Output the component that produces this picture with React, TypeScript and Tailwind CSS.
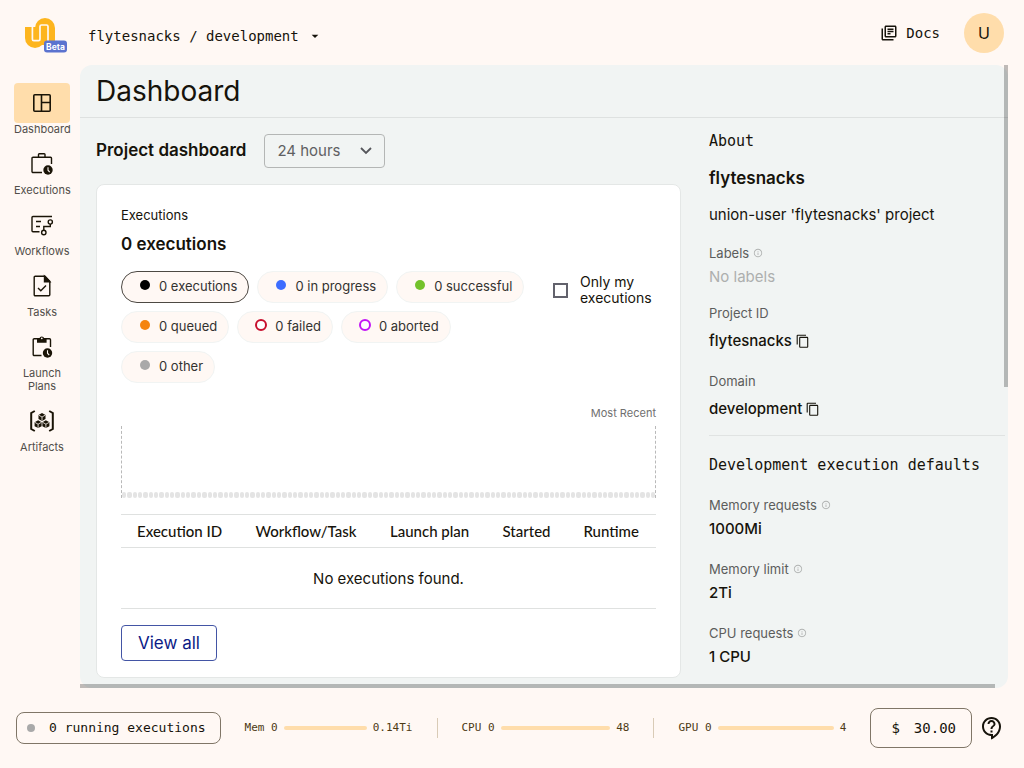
import type { ReactNode } from "react";
import {
  MdArrowDropDown,
  MdInfoOutline,
  MdOutlineContactSupport,
  MdOutlineLibraryBooks,
} from "react-icons/md";

const mono = "font-['DejaVu_Sans_Mono','Liberation_Mono',monospace]";

function Logo() {
  return (
    <svg viewBox="0 0 43 36" className="h-9 w-[43px]" aria-hidden="true">
      <path d="M0 10h20v11a10 10 0 0 1-20 0Z" fill="#fdb51e" />
      <path d="M10 28V11a10 10 0 0 1 20 0v17H20Z" fill="#fdb51e" />
      <path d="M0 10h8V0H0Z" fill="#fff8f4" />
      <path d="M20 32c2-2 3.500-4 3.500-8H31v8Z" fill="#fff8f4" />
      <path d="M7.400 8.500v13.700q0 1.500 1.500 1.500h4.600q1.500 0 1.500-1.500V9.500q0-1.500 1.500-1.500h5q1.500 0 1.500 1.500V24" fill="none" stroke="#fff8f4" strokeWidth="1.700" />
      <rect x="19" y="23.500" width="23" height="12" rx="3" fill="#5b73cf" />
      <text x="30.500" y="32.600" textAnchor="middle" fontSize="8.500" fontWeight="700" fill="#ffffff" fontFamily="Inter, sans-serif">Beta</text>
    </svg>
  );
}

function Svg({ children }: { children: ReactNode }) {
  return (
    <svg viewBox="0 0 24 24" className="size-6" fill="none" stroke="currentColor" strokeWidth="1.400" aria-hidden="true">
      {children}
    </svg>
  );
}

function Clock({ cx, cy }: { cx: number; cy: number }) {
  return (
    <>
      <circle cx={cx} cy={cy} r="4.700" fill="currentColor" stroke="none" />
      <path d={`M${cx} ${cy - 2.8}v3l1.700 1.900`} stroke="#fff8f4" strokeWidth="1.100" />
    </>
  );
}

function DashboardIcon() {
  return (
    <Svg>
      <rect x="3.800" y="3.800" width="16.400" height="16.400" rx="1" strokeWidth="1.600" />
      <path d="M11.500 4v16M11.500 11.500H20" strokeWidth="1.600" />
    </Svg>
  );
}

function ExecutionsIcon() {
  return (
    <Svg>
      <path d="M12 20.500H3a1 1 0 0 1-1-1V6.200a1 1 0 0 1 1-1h17.500a1 1 0 0 1 1 1V12M8.500 5V2.500a.8.800 0 0 1 .8-.8h4.900a.8.800 0 0 1 .8.800V5" />
      <Clock cx={18} cy={18} />
    </Svg>
  );
}

function WorkflowsIcon() {
  return (
    <Svg>
      <path d="M22 3.500H3a1 1 0 0 0-1 1v13.300a1 1 0 0 0 1 1h6.500M6 8.500h5M6 13.500h4M20.300 11v2.500h-6.500v3.700" />
      <circle cx="20.300" cy="9" r="2.100" />
      <circle cx="13.800" cy="19.500" r="2.200" />
    </Svg>
  );
}

function TasksIcon() {
  return (
    <Svg>
      <path d="M5.200 2.200h9.800l4.800 5v13.600a1 1 0 0 1-1 1H5.200a1 1 0 0 1-1-1V3.200a1 1 0 0 1 1-1ZM8 14l2.800 2.800L16 11.500" />
      <path d="M14.500 2.200v5.500h5.300Z" fill="currentColor" />
    </Svg>
  );
}

function LaunchIcon() {
  return (
    <Svg>
      <path d="M11.500 20.500H4.200a1 1 0 0 1-1-1V4.700a1 1 0 0 1 1-1H19.500a1 1 0 0 1 1 1V12" />
      <path d="M7 3.200h2.400a2.500 2.500 0 0 1 4.800 0h2.400v4.500H7Z" fill="currentColor" stroke="none" />
      <circle cx="11.800" cy="3.300" r=".9" fill="#fff8f4" stroke="none" />
      <Clock cx={17.5} cy={18} />
    </Svg>
  );
}

function Cube({ x, y }: { x: number; y: number }) {
  return (
    <g transform={`translate(${x} ${y})`}>
      <path d="M0-3.900 3.500-2v4L0 3.900-3.500 2v-4Z" fill="currentColor" stroke="none" />
      <path d="M-3.200-1.800 0 0l3.200-1.800M0 0v3.600" stroke="#fff8f4" strokeWidth=".8" />
    </g>
  );
}

function ArtifactsIcon() {
  return (
    <Svg>
      <path d="M4.800 2 1.200 4v16l3.600 2M19.200 2l3.600 2v16l-3.600 2" strokeWidth="2" />
      <Cube x={12} y={8} />
      <Cube x={8.1} y={15.2} />
      <Cube x={15.9} y={15.2} />
    </Svg>
  );
}

const navigation = [
  { label: "Dashboard", icon: <DashboardIcon />, active: true },
  { label: "Executions", icon: <ExecutionsIcon />, active: false },
  { label: "Workflows", icon: <WorkflowsIcon />, active: false },
  { label: "Tasks", icon: <TasksIcon />, active: false },
  { label: "Launch Plans", icon: <LaunchIcon />, active: false },
  { label: "Artifacts", icon: <ArtifactsIcon />, active: false },
];

const filters = [
  { label: "0 executions", dot: "size-2.5 bg-black", border: "border-[#4d4943]" },
  { label: "0 in progress", dot: "size-2.5 bg-[#3d6dff]", border: "border-[#f1f4f3]" },
  { label: "0 successful", dot: "size-2.5 bg-[#73c22b]", border: "border-[#f1f4f3]" },
  { label: "0 queued", dot: "size-2.5 bg-[#f5840f]", border: "border-[#f1f4f3]" },
  { label: "0 failed", dot: "size-3 border-2 border-[#c8102e] bg-white", border: "border-[#f1f4f3]" },
  { label: "0 aborted", dot: "size-3 border-2 border-[#c316f5] bg-white", border: "border-[#f1f4f3]" },
  { label: "0 other", dot: "size-2.5 bg-[#a9a9a9]", border: "border-[#f1f4f3]" },
];

const columns = ["Execution ID", "Workflow/Task", "Launch plan", "Started", "Runtime"];

const resources = [
  { label: "Memory requests", value: "1000Mi" },
  { label: "Memory limit", value: "2Ti" },
  { label: "CPU requests", value: "1 CPU" },
];

const usage = [
  { label: "Mem 0", limit: "0.14Ti" },
  { label: "CPU 0", limit: "48" },
  { label: "GPU 0", limit: "4" },
];

function FieldLabel({ children, info }: { children: ReactNode; info?: boolean }) {
  return (
    <dt className="flex items-center gap-1 text-[13px] leading-5 text-[#5c5d5c]">
      {children}
      {info && <MdInfoOutline className="size-2.5 text-[#b0b2b1]" />}
    </dt>
  );
}

function Copyable({ value }: { value: string }) {
  return (
    <dd className="mt-2 flex items-center gap-1 text-[15px] leading-5 font-medium">
      {value}
      <button type="button" aria-label={`Copy ${value}`}>
        <svg viewBox="0 0 14 14" className="size-3.5" fill="none" stroke="currentColor" strokeWidth="1.100" aria-hidden="true">
          <path d="M1.200 10.500V1.700a.5.500 0 0 1 .5-.5h8.300" />
          <rect x="3.700" y="3.400" width="8" height="9.800" rx=".5" />
        </svg>
      </button>
    </dd>
  );
}

function Header() {
  return (
    <header className="flex h-[65px] shrink-0 items-center pr-5 pl-[25px]">
      <a href="#home" aria-label="Home" className="pt-1">
        <Logo />
      </a>
      <button type="button" className={`ml-5 flex items-center gap-2 pt-1.5 text-sm ${mono}`}>
        flytesnacks / development
        <MdArrowDropDown className="size-4" />
      </button>
      <a href="#docs" className={`ml-auto flex items-center gap-2 text-sm ${mono}`}>
        <MdOutlineLibraryBooks className="size-4.5" />
        Docs
      </a>
      <button type="button" className="ml-6 size-10 rounded-full bg-[#ffddab] text-base">
        U
      </button>
    </header>
  );
}

function Sidebar() {
  return (
    <nav className="w-20 shrink-0 pt-[18px] pl-1">
      <ul className="flex flex-col items-center gap-2">
        {navigation.map((item) => (
          <li key={item.label}>
            <a href="#section" className="block w-14 text-center text-[11px] leading-[13px] text-[#514e4a]">
              <span className={`flex h-10 items-center justify-center rounded text-[#1a1407] ${item.active ? "bg-[#ffddab]" : ""}`}>
                {item.icon}
              </span>
              {item.label}
            </a>
          </li>
        ))}
      </ul>
    </nav>
  );
}

function ExecutionsCard() {
  return (
    <section className="mt-4 rounded-lg border border-[#e4e7e6] bg-white px-6 pt-5 pb-4">
      <h3 className="text-[13px] leading-5">Executions</h3>
      <p className="mt-[7px] text-[17px] leading-6 font-semibold">0 executions</p>
      <div className="mt-[15px] flex items-start justify-between">
        <div className="flex max-w-[416px] flex-wrap gap-2">
          {filters.map((filter) => (
            <button
              key={filter.label}
              type="button"
              className={`flex h-8 items-center gap-2 rounded-full border bg-[#fff8f4] pr-[11px] pl-[17px] text-[13px] text-[#333230] ${filter.border}`}
            >
              <span className="mb-1 flex w-3 justify-center">
                <span className={`rounded-full ${filter.dot}`} />
              </span>
              {filter.label}
            </button>
          ))}
        </div>
        <label className="mt-[3px] flex w-[103px] items-center gap-3 text-sm leading-4">
          <input type="checkbox" className="size-[15px] shrink-0 appearance-none border-2 border-[#62626c] bg-white" />
          <span>Only my executions</span>
        </label>
      </div>
      <p className="mt-[22px] text-right text-[11px] leading-4 text-[#70706f]">Most Recent</p>
      <div className="mt-[5px] flex h-[72px] items-end gap-px border-x border-dashed border-[#b9b9b9]">
        {Array.from({ length: 100 }, (_, i) => (
          <span key={i} className="h-1.5 flex-1 rounded-[2px] bg-[#e4e4e4]" />
        ))}
      </div>
      <table className="mt-4 w-full border-collapse">
        <thead>
          <tr className="h-[33px] border-y border-[#dfe1e0]">
            {columns.map((column) => (
              <th key={column} className="px-4 text-left font-['Lato',sans-serif] text-[15px] leading-5 font-medium whitespace-nowrap">
                {column}
              </th>
            ))}
          </tr>
        </thead>
        <tbody>
          <tr className="h-[61px] border-b border-[#dfe1e0]">
            <td colSpan={5} className="pt-0.5 text-center text-[15px] leading-5">
              No executions found.
            </td>
          </tr>
        </tbody>
      </table>
      <button type="button" className="mt-4 h-9 rounded border border-[#4355a5] px-4 pt-0.5 text-[17px] text-[#0b1a86]">
        View all
      </button>
    </section>
  );
}

function About() {
  return (
    <aside className="w-[296px] shrink-0 pt-[13px]">
      <h2 className={`text-[15px] leading-5 ${mono}`}>About</h2>
      <p className="mt-[15px] text-[17px] leading-6 font-semibold">flytesnacks</p>
      <p className="mt-[15px] text-[15px] leading-5">union-user 'flytesnacks' project</p>
      <dl className="border-b border-[#e0e3e2] pb-4">
        <div className="mt-[18px]">
          <FieldLabel info>Labels</FieldLabel>
          <dd className="mt-1 text-[15px] leading-5 text-[#adafae]">No labels</dd>
        </div>
        <div className="mt-4">
          <FieldLabel>Project ID</FieldLabel>
          <Copyable value="flytesnacks" />
        </div>
        <div className="mt-5">
          <FieldLabel>Domain</FieldLabel>
          <Copyable value="development" />
        </div>
      </dl>
      <h2 className={`mt-[19px] text-[15px] leading-5 whitespace-nowrap ${mono}`}>Development execution defaults</h2>
      <dl>
        {resources.map((resource) => (
          <div key={resource.label} className="mt-5">
            <FieldLabel info>{resource.label}</FieldLabel>
            <dd className="mt-1 text-[15px] leading-5 font-medium">{resource.value}</dd>
          </div>
        ))}
      </dl>
    </aside>
  );
}

function Footer() {
  return (
    <footer className={`flex h-20 shrink-0 items-center pr-5 pl-4 ${mono}`}>
      <button type="button" className="flex h-8 items-center gap-3.5 rounded-lg border border-[#807667] pr-3.5 pl-2.5 text-[13px]">
        <span className="size-2 rounded-full bg-[#a9a9a9]" />
        0 running executions
      </button>
      <div className="flex flex-1 divide-x divide-[#d9cbb6]">
        {usage.map((item) => (
          <div key={item.label} className="flex h-5 flex-1 items-center gap-1.5 px-6 text-[11px] font-medium text-[#4d3a14]">
            <span>{item.label}</span>
            <span className="h-1 flex-1 rounded-full bg-[#ffddab]" />
            <span>{item.limit}</span>
          </div>
        ))}
      </div>
      <button type="button" className="flex h-10 items-center gap-3.5 rounded-lg border border-[#807667] pr-[15px] pl-5 text-sm font-medium">
        <span>$</span>
        <span>30.00</span>
      </button>
      <button type="button" aria-label="Help" className="ml-2">
        <MdOutlineContactSupport className="size-6" />
      </button>
    </footer>
  );
}

export default function App() {
  return (
    <div className="flex h-screen flex-col overflow-hidden bg-[#fff8f4] font-['Inter',sans-serif] text-[#16130b]">
      <Header />
      <div className="flex min-h-0 flex-1 pr-4">
        <Sidebar />
        <main className="relative min-w-0 flex-1 overflow-hidden">
          <div className="h-full overflow-hidden rounded-xl bg-[#f1f4f3]">
            <h1 className="border-b border-[#dee1e0] px-4 text-[28px] leading-[52px]">Dashboard</h1>
            <div className="flex gap-7 pr-[3px] pl-4">
              <div className="min-w-0 flex-1 pt-4">
                <div className="flex items-center gap-[18px]">
                  <h2 className="text-[17px] font-semibold">Project dashboard</h2>
                  <div className="relative">
                    <select
                      aria-label="Time range"
                      className="block h-[34px] w-[121px] appearance-none rounded border border-[#b4b6b5] bg-transparent pl-3 text-[15px] text-[#5f6062]"
                    >
                      <option>24 hours</option>
                    </select>
                    <svg viewBox="0 0 12 8" className="pointer-events-none absolute top-[13px] right-[13px] h-2 w-3" aria-hidden="true">
                      <path d="m1 1 5 5 5-5" fill="none" stroke="#55565b" strokeWidth="1.800" />
                    </svg>
                  </div>
                </div>
                <ExecutionsCard />
              </div>
              <About />
            </div>
          </div>
          <span className="absolute top-0 right-0 h-[51.7%] w-1 bg-black/25" />
          <span className="absolute bottom-0 left-0 h-1 w-[98.6%] bg-black/25" />
        </main>
      </div>
      <Footer />
    </div>
  );
}
